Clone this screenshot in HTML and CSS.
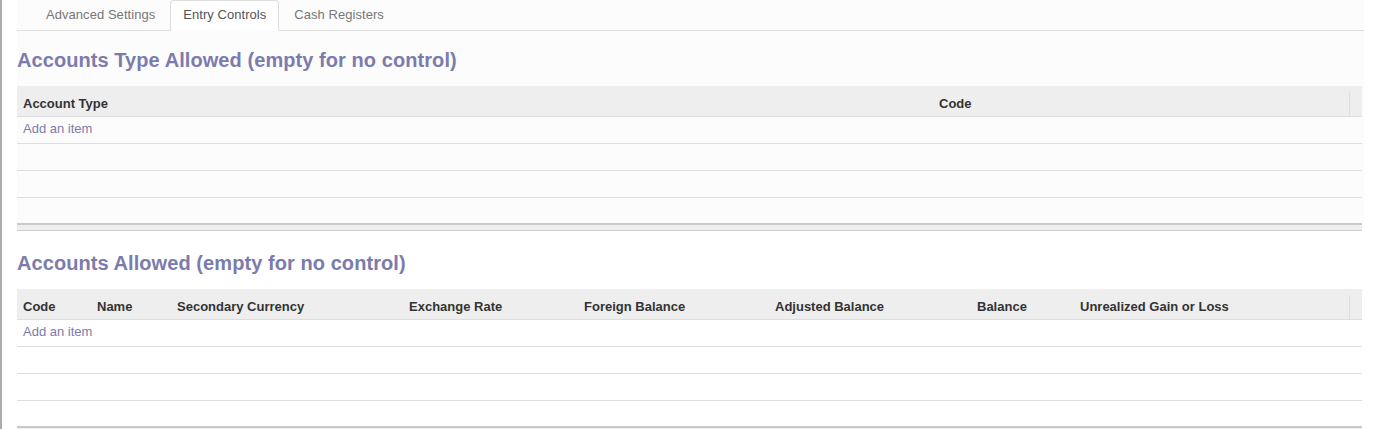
FILE: index.html
```html
<!DOCTYPE html>
<html>
<head>
<meta charset="utf-8">
<link rel="stylesheet" href="styles.css">
</head>
<body>
<div class="frame">
  <div class="sheet">
    <div class="block-top">
      <ul class="tabs">
        <li class="tab">Advanced Settings</li>
        <li class="tab active">Entry Controls</li>
        <li class="tab">Cash Registers</li>
      </ul>
      <section class="section first">
        <h2 class="title">Accounts Type Allowed (empty for no control)</h2>
        <table class="list">
          <colgroup>
            <col class="c-type"><col class="c-tcode"><col class="c-trash">
          </colgroup>
          <thead>
            <tr><th>Account Type</th><th>Code</th><th class="trash"><span class="sep"></span></th></tr>
          </thead>
          <tbody>
            <tr class="row"><td colspan="3" class="add"><a class="add-link">Add an item</a></td></tr>
            <tr class="row"><td colspan="3"></td></tr>
            <tr class="row"><td colspan="3"></td></tr>
            <tr class="row last"><td colspan="3"></td></tr>
          </tbody>
          <tfoot>
            <tr><td colspan="3"></td></tr>
          </tfoot>
        </table>
      </section>
    </div>
    <section class="section second">
      <h2 class="title">Accounts Allowed (empty for no control)</h2>
      <table class="list">
        <colgroup>
          <col class="c-code"><col class="c-name"><col class="c-sec"><col class="c-rate"><col class="c-foreign"><col class="c-adj"><col class="c-bal"><col class="c-unr"><col class="c-trash">
        </colgroup>
        <thead>
          <tr>
            <th>Code</th><th>Name</th><th>Secondary Currency</th><th>Exchange Rate</th><th>Foreign Balance</th><th>Adjusted Balance</th><th>Balance</th><th>Unrealized Gain or Loss</th><th class="trash"><span class="sep"></span></th>
          </tr>
        </thead>
        <tbody>
          <tr class="row"><td colspan="9" class="add"><a class="add-link">Add an item</a></td></tr>
          <tr class="row"><td colspan="9"></td></tr>
          <tr class="row"><td colspan="9"></td></tr>
          <tr class="row last"><td colspan="9"></td></tr>
        </tbody>
        <tfoot>
          <tr><td colspan="9"></td></tr>
        </tfoot>
      </table>
    </section>
  </div>
</div>
</body>
</html>
```

FILE: styles.css
```css
* { box-sizing: border-box; }

html, body {
  margin: 0;
  padding: 0;
  background: #ffffff;
  font-family: "Liberation Sans", Arial, sans-serif;
  font-size: 13px;
  color: #333;
}

.frame {
  border-left: 2px solid #acacac;
  min-height: 429px;
  padding: 0 16px 0 15px;
}

.sheet {
  width: 1347px;
}

.block-top {
  background: #fcfcfc;
}

.tabs {
  list-style: none;
  margin: 0;
  padding: 0 0 0 16px;
  display: flex;
  border-bottom: 1px solid #dddddd;
  background: #fcfcfc;
}

.tab {
  padding: 5px 12px 6px;
  line-height: 18px;
  letter-spacing: 0.05px;
  border: 1px solid transparent;
  border-radius: 4px 4px 0 0;
  margin-right: 2px;
  margin-bottom: -1px;
  color: #777;
}

.tab.active {
  background: #ffffff;
  border-color: #dddddd #dddddd transparent;
  color: #555;
}

.section {
  display: flex;
  flex-direction: column;
}

.section.second {
  padding-top: 3px;
}

.title {
  margin: 18px 0 15px;
  font-size: 20px;
  line-height: 22px;
  font-weight: bold;
  letter-spacing: 0.07px;
  color: #7c7bad;
}

.list {
  width: 1345px;
  border-collapse: collapse;
  table-layout: fixed;
}

.c-type { width: 916px; }
.c-tcode { width: 416px; }
.c-trash { width: 13px; }

.c-code { width: 74px; }
.c-name { width: 80px; }
.c-sec { width: 232px; }
.c-rate { width: 175px; }
.c-foreign { width: 191px; }
.c-adj { width: 202px; }
.c-bal { width: 103px; }
.c-unr { width: 275px; }

.list thead tr {
  background: #eeeeee;
  border-bottom: 1px solid #dddddd;
}

.list th {
  text-align: left;
  font-weight: bold;
  color: #333;
  padding: 9px 6px 3px;
  line-height: 18px;
  height: 30px;
  white-space: nowrap;
}

.list th.trash {
  padding: 6px 0 0;
  vertical-align: bottom;
}

.sep {
  display: block;
  height: 24px;
  border-left: 1px solid #dddddd;
}

.row td {
  height: 27px;
  border-bottom: 1px solid #dddddd;
  padding: 0 6px;
}

.row.last td {
  height: 26px;
  border-bottom: none;
}

.row td.add {
  padding: 3px 6px 5px;
  line-height: 18px;
  vertical-align: top;
}

.add-link {
  color: #7c7bad;
  text-decoration: none;
}

.list tfoot tr {
  background: #eeeeee;
  border-top: 2px solid #cacaca;
  border-bottom: 1px solid #cfcfcf;
}

.list tfoot td {
  height: 7px;
  padding: 0;
}
```
